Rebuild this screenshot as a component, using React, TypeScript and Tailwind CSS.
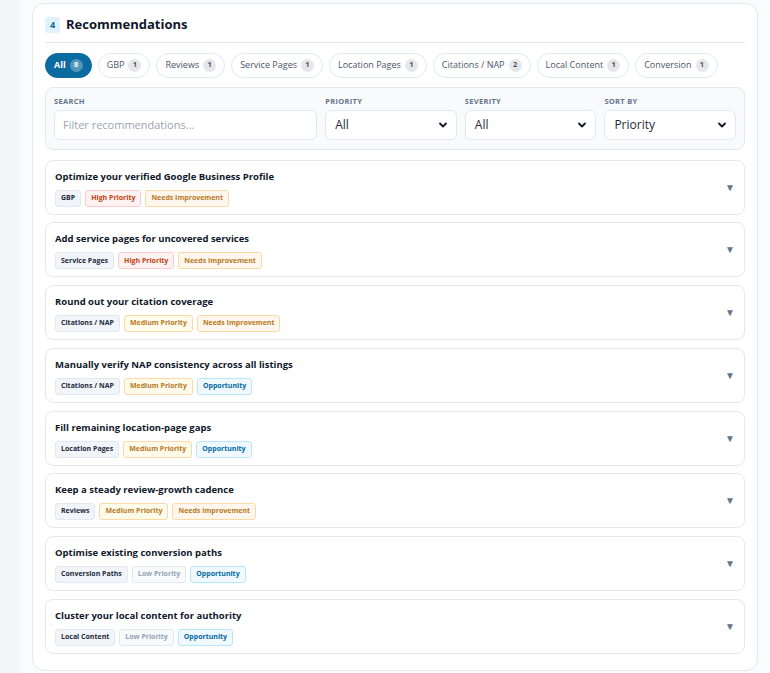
import { useState } from "react";

type Tag = { label: string; tone: "cat" | "high" | "medium" | "low" | "needs" | "opp" };

const tabs = [
  { label: "All", count: 8 },
  { label: "GBP", count: 1 },
  { label: "Reviews", count: 1 },
  { label: "Service Pages", count: 1 },
  { label: "Location Pages", count: 1 },
  { label: "Citations / NAP", count: 2 },
  { label: "Local Content", count: 1 },
  { label: "Conversion", count: 1 },
];

const recs: { title: string; tags: Tag[] }[] = [
  {
    title: "Optimize your verified Google Business Profile",
    tags: [
      { label: "GBP", tone: "cat" },
      { label: "High Priority", tone: "high" },
      { label: "Needs Improvement", tone: "needs" },
    ],
  },
  {
    title: "Add service pages for uncovered services",
    tags: [
      { label: "Service Pages", tone: "cat" },
      { label: "High Priority", tone: "high" },
      { label: "Needs Improvement", tone: "needs" },
    ],
  },
  {
    title: "Round out your citation coverage",
    tags: [
      { label: "Citations / NAP", tone: "cat" },
      { label: "Medium Priority", tone: "medium" },
      { label: "Needs Improvement", tone: "needs" },
    ],
  },
  {
    title: "Manually verify NAP consistency across all listings",
    tags: [
      { label: "Citations / NAP", tone: "cat" },
      { label: "Medium Priority", tone: "medium" },
      { label: "Opportunity", tone: "opp" },
    ],
  },
  {
    title: "Fill remaining location-page gaps",
    tags: [
      { label: "Location Pages", tone: "cat" },
      { label: "Medium Priority", tone: "medium" },
      { label: "Opportunity", tone: "opp" },
    ],
  },
  {
    title: "Keep a steady review-growth cadence",
    tags: [
      { label: "Reviews", tone: "cat" },
      { label: "Medium Priority", tone: "medium" },
      { label: "Needs Improvement", tone: "needs" },
    ],
  },
  {
    title: "Optimise existing conversion paths",
    tags: [
      { label: "Conversion Paths", tone: "cat" },
      { label: "Low Priority", tone: "low" },
      { label: "Opportunity", tone: "opp" },
    ],
  },
  {
    title: "Cluster your local content for authority",
    tags: [
      { label: "Local Content", tone: "cat" },
      { label: "Low Priority", tone: "low" },
      { label: "Opportunity", tone: "opp" },
    ],
  },
];

const toneClass: Record<Tag["tone"], string> = {
  cat: "bg-[#f1f5f9] border-[#e2e8f0] text-[#1e293b]",
  high: "bg-[#fef2f2] border-[#fecaca] text-[#c2410c]",
  medium: "bg-[#fffbeb] border-[#fcd9a5] text-[#b7791f]",
  needs: "bg-[#fff7ed] border-[#fcd9a5] text-[#b7791f]",
  low: "bg-[#f8fafc] border-[#e2e8f0] text-[#94a3b8]",
  opp: "bg-[#f0f9ff] border-[#bae6fd] text-[#0369a1]",
};

const Chevron = () => (
  <svg width="10" height="10" viewBox="0 0 10 10" className="absolute right-2 top-1/2 -translate-y-1/2 pointer-events-none">
    <path d="M2 3.5 L5 6.5 L8 3.5" fill="none" stroke="#111827" strokeWidth="1.8" strokeLinecap="round" strokeLinejoin="round" />
  </svg>
);

const SelectBox = ({ value }: { value: string }) => (
  <div className="relative h-[30px] rounded-md border border-[#e2e8f0] bg-white flex items-center px-[9px] text-[12px] text-[#1f2937]">
    {value}
    <Chevron />
  </div>
);

export default function App() {
  const [active, setActive] = useState("All");

  return (
    <div className="min-h-[673px] flex bg-[#fafbfc] font-['Open_Sans',sans-serif]">
      <div className="w-[20px] shrink-0 bg-[#f3f5f8]" />
      <div className="flex-1 min-w-0 pl-[12px] pr-[12px] pt-[3px]">
        <div className="rounded-xl border border-[#e5e7eb] bg-white px-[12px] pb-[16px]">
          <div className="flex items-center gap-[6px] pt-[11px] pb-[7px] border-b border-[#e5e7eb]">
            <span className="w-[15px] h-[16px] rounded-[3px] bg-[#e0f2fe] text-[#0369a1] text-[9px] font-bold flex items-center justify-center">4</span>
            <h2 className="text-[13px] font-bold text-[#0f172a]">Recommendations</h2>
          </div>

          <div className="flex flex-wrap gap-[6px] mt-[10px]">
            {tabs.map((t) => {
              const on = t.label === active;
              return (
                <button
                  key={t.label}
                  onClick={() => setActive(t.label)}
                  className={`shrink-0 whitespace-nowrap h-[25px] rounded-full px-[8px] flex items-center gap-[4px] text-[9px] border ${
                    on ? "bg-[#0b6aa0] border-[#0b6aa0] text-white font-bold" : "bg-white border-[#e2e8f0] text-[#475569]"
                  }`}
                >
                  {t.label}
                  <span
                    className={`min-w-[13px] h-[13px] px-[3px] rounded-full text-[7.5px] font-bold flex items-center justify-center ${
                      on ? "bg-white/30 text-white" : "bg-[#e5e7eb] text-[#475569]"
                    }`}
                  >
                    {t.count}
                  </span>
                </button>
              );
            })}
          </div>

          <div className="mt-[9px] rounded-lg border border-[#e5e7eb] bg-[#f8fafc] px-[8px] pt-[8px] pb-[9px] grid grid-cols-[2fr_1fr_1fr_1fr] gap-x-[8px]">
            {[
              ["Search", null],
              ["Priority", "All"],
              ["Severity", "All"],
              ["Sort by", "Priority"],
            ].map(([label, val]) => (
              <div key={label as string} className="flex flex-col gap-[3px] min-w-0">
                <span className="text-[7.5px] font-bold uppercase tracking-[0.3px] text-[#64748b]">{label}</span>
                {val === null ? (
                  <div className="h-[30px] rounded-md border border-[#e2e8f0] bg-white flex items-center px-[8px] text-[11px] text-[#9ca3af]">
                    Filter recommendations...
                  </div>
                ) : (
                  <SelectBox value={val as string} />
                )}
              </div>
            ))}
          </div>

          <div className="mt-[10px] flex flex-col gap-[7.7px]">
            {recs.map((r) => (
              <div key={r.title} className="h-[55px] rounded-lg border border-[#e5e7eb] bg-white px-[9px] flex items-center justify-between">
                <div className="self-start pt-[10px] flex flex-col gap-[7px]">
                  <div className="text-[9.5px] font-bold text-[#0f172a] leading-[12px]">{r.title}</div>
                  <div className="flex gap-[4px]">
                    {r.tags.map((tg) => (
                      <span key={tg.label} className={`h-[17px] px-[5px] rounded-[3px] border text-[7px] font-bold flex items-center ${toneClass[tg.tone]}`}>
                        {tg.label}
                      </span>
                    ))}
                  </div>
                </div>
                <span className="text-[10px] text-[#64748b]">▼</span>
              </div>
            ))}
          </div>
        </div>
      </div>
    </div>
  );
}
